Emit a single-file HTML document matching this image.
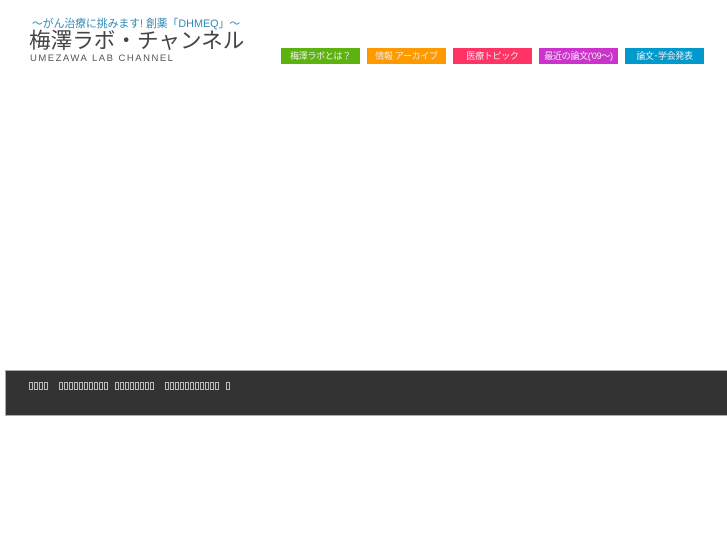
<!DOCTYPE html>
<html><head><meta charset="utf-8"><style>
body{margin:0;width:727px;height:545px;background:#fff;position:relative;overflow:hidden;font-family:"Liberation Sans","Noto Sans CJK JP",sans-serif}
.a{position:absolute;white-space:nowrap}
.tag{left:32px;top:15px;font-size:10.8px;color:#2f8ab8}
.ti{left:29px;top:28px;font-size:21.6px;color:#444;line-height:26px}
.sub{left:30px;top:53px;font-size:9.5px;color:#555;letter-spacing:1.5px}
.b{position:absolute;top:48px;width:79px;height:16px;color:#eee;font-size:9px;line-height:16px;text-align:center;white-space:nowrap;letter-spacing:-0.3px;overflow:hidden}
.f{position:absolute;left:5px;top:370px;width:722px;height:46px;background:#333;border:1px solid #aaa;border-right:none;box-sizing:border-box}
.g{position:absolute;top:11px;height:8px;display:flex}
.g i{display:block;box-sizing:border-box;width:4px;height:8px;border:1px solid #bbb;margin-right:1px}
</style></head><body>
<div class="a tag">〜がん治療に挑みます! 創薬「DHMEQ」〜</div>
<div class="a ti">梅澤ラボ・チャンネル</div>
<div class="a sub">UMEZAWA LAB CHANNEL</div>
<div class="b" style="left:281px;background:#5cb30f">梅澤ラボとは？</div>
<div class="b" style="left:367px;background:#ff9900">情報 アーカイブ</div>
<div class="b" style="left:453px;background:#ff3366">医療トピック</div>
<div class="b" style="left:539px;background:#cc33cc">最近の論文('09〜)</div>
<div class="b" style="left:625px;background:#0099cc">論文･学会発表</div>
<div class="f">
<div class="g" style="left:23px"><i></i><i></i><i></i><i></i></div>
<div class="g" style="left:53px"><i></i><i></i><i></i><i></i><i></i><i></i><i></i><i></i><i></i><i></i></div>
<div class="g" style="left:109px"><i></i><i></i><i></i><i></i><i></i><i></i><i></i><i></i></div>
<div class="g" style="left:159px"><i></i><i></i><i></i><i></i><i></i><i></i><i></i><i></i><i></i><i></i><i></i></div>
<div class="g" style="left:220px"><i></i></div>
</div>
</body></html>
